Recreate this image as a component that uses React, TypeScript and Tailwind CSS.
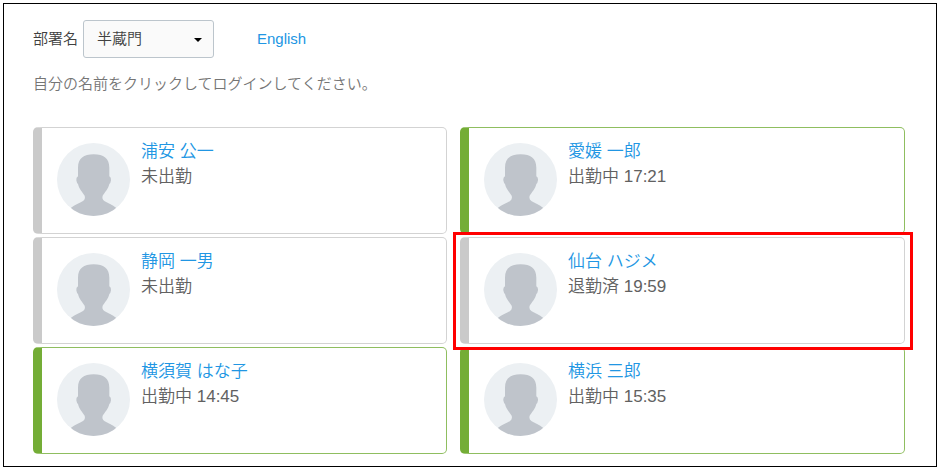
import { useId, useState } from "react";
import clsx from "clsx";

type Member = {
  name: string;
  status: string;
  time?: string;
  working?: boolean;
  selected?: boolean;
};

const members: Member[] = [
  { name: "浦安 公一", status: "未出勤" },
  { name: "愛媛 一郎", status: "出勤中", time: "17:21", working: true },
  { name: "静岡 一男", status: "未出勤" },
  { name: "仙台 ハジメ", status: "退勤済", time: "19:59", selected: true },
  { name: "横須賀 はな子", status: "出勤中", time: "14:45", working: true },
  { name: "横浜 三郎", status: "出勤中", time: "15:35", working: true },
];

function Avatar() {
  const clipId = useId();

  return (
    <svg viewBox="0 0 219 219" className="size-[73px] shrink-0" aria-hidden="true">
      <clipPath id={clipId}>
        <circle cx="109.5" cy="109.5" r="109.5" />
      </clipPath>
      <g clipPath={`url(#${clipId})`}>
        <rect width="219" height="219" fill="#ecf0f3" />
        <path
          fill="#bfc4cb"
          d="M110 34C80 34 63 46 63 74V100Q57 103 58 112Q59 120 63 123C66 138 77 148 83 158Q86 168 78 174C68 181 54 185 41 195L30 219H189L178 195C166 185 152 181 142 174Q134 168 137 158C143 148 154 138 157 123Q161 120 162 112Q163 103 157 100V74C157 46 140 34 110 34Z"
        />
      </g>
    </svg>
  );
}

function MemberCard({ member }: { member: Member }) {
  return (
    <li className="relative">
      <div
        className={clsx(
          "flex h-[107px] gap-[11px] rounded-[5px] border border-l-[9px] pt-[15px] pl-[15px]",
          member.working ? "border-[#8fbe60] border-l-[#74ad36]" : "border-[#d3d3d3] border-l-[#cacaca]",
        )}
      >
        <Avatar />
        <div className="-mt-1 text-[17px] leading-[25px]">
          <a href="#" className="text-[#2196e3]">
            {member.name}
          </a>
          <p className="text-[#616161]">
            {member.status} {member.time}
          </p>
        </div>
      </div>
      {member.selected && (
        <div className="pointer-events-none absolute -top-[5px] -right-2 -bottom-1.5 -left-[7px] z-10 border-3 border-[#ff0000]" />
      )}
    </li>
  );
}

export default function App() {
  const [department, setDepartment] = useState("半蔵門");

  return (
    <div className="bg-white p-[3px] font-['Liberation_Sans','Noto_Sans_CJK_JP',sans-serif] font-[350]" lang="ja">
      <main className="border border-black pt-4 pr-[31px] pb-3 pl-[29px]">
        <header className="flex items-center text-[15px]">
          <label htmlFor="department" className="mr-[5px] text-[#404040]">
            部署名
          </label>
          <div className="relative">
            <select
              id="department"
              value={department}
              onChange={(event) => setDepartment(event.target.value)}
              className="h-[38px] w-[131px] appearance-none rounded-[3px] border border-[#bcc5cc] bg-[#fafafa] px-[13px] text-[#404040]"
            >
              <option>半蔵門</option>
            </select>
            <svg
              viewBox="0 0 8 4"
              className="pointer-events-none absolute top-[18px] right-3 h-1 w-2"
              aria-hidden="true"
            >
              <path d="M0 0H8L4 4Z" fill="#000" />
            </svg>
          </div>
          <a href="#" className="ml-[43px] text-[#2196e3]">
            English
          </a>
        </header>

        <p className="mt-3.5 text-[15px] leading-6 text-[#757575]">
          自分の名前をクリックしてログインしてください。
        </p>

        <ul className="mt-[31px] grid grid-cols-[414fr_445fr] gap-x-[13px] gap-y-[3px]">
          {members.map((member) => (
            <MemberCard key={member.name} member={member} />
          ))}
        </ul>
      </main>
    </div>
  );
}
